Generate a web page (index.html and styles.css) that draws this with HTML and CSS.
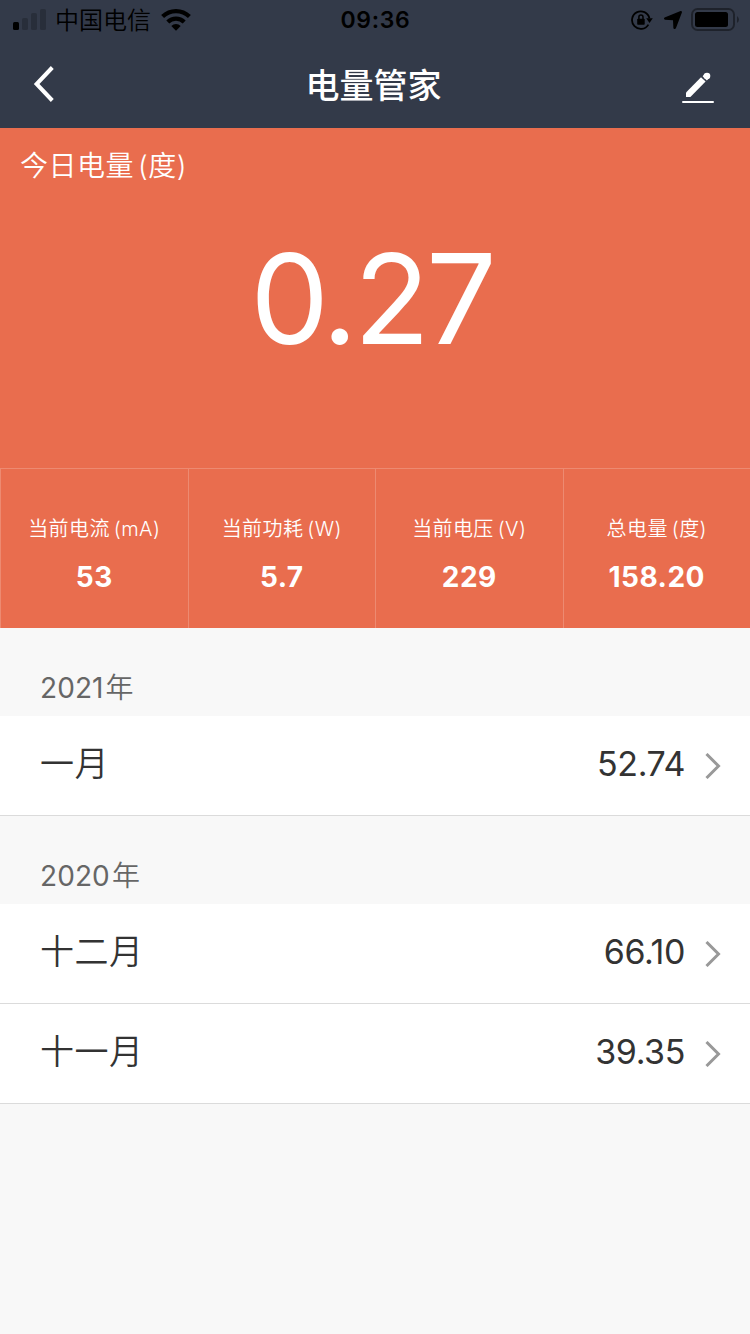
FILE: index.html
```
<!DOCTYPE html>
<html lang="zh-CN">
<head>
  <meta charset="UTF-8">
  <title>电量管家</title>
  <meta name="viewport" content="width=device-width,initial-scale=1">
  <link rel="stylesheet" href="styles.css">
</head>
<body>
  <header class="header">
    <div class="status-bar">
      <div class="status-left">
        <svg class="signal" width="33" height="22" viewBox="0 0 33 22">
          <rect x="0" y="13" width="6" height="8" rx="1.5"/>
          <g fill-opacity="0.2">
            <rect x="9" y="9" width="6" height="12" rx="1.5"/>
            <rect x="18" y="4" width="6" height="17" rx="1.5"/>
            <rect x="27" y="0" width="6" height="21" rx="1.5"/>
          </g>
        </svg>
        <span class="carrier">中国电信</span>
        <svg class="wifi" width="30" height="22" viewBox="0 0 30 22">
          <g fill="none" stroke="#000" stroke-width="4.2">
            <path d="M1.6 7.6 A19.2 19.2 0 0 1 28.4 7.6"/>
            <path d="M6.8 13.1 A11.6 11.6 0 0 1 23.2 13.1"/>
          </g>
          <path d="M10.3 16.9 A6.6 6.6 0 0 1 19.7 16.9 L15 21.8 Z"/>
        </svg>
      </div>
      <span class="clock">09:36</span>
      <div class="status-right">
        <svg class="lock" width="22" height="20" viewBox="0 0 22 20">
          <path d="M17.4 14.6 A8.8 8.8 0 1 1 18.4 8.2" fill="none" stroke="#000" stroke-width="1.8"/>
          <path d="M15.2 8.2 H21.8 L18.5 13 Z"/>
          <rect x="6.2" y="8.7" width="7.5" height="6" rx="0.8"/>
          <path d="M7.9 9 V7 a2.05 2.05 0 0 1 4.1 0 V9" fill="none" stroke="#000" stroke-width="1.5"/>
        </svg>
        <svg class="location" width="18" height="18" viewBox="0 0 18 18">
          <path d="M16.6 0.1 Q18.2 -0.1 17.9 1.4 L12 17 Q10.6 19 9.4 17.2 L9 9.2 L1 8.8 Q-0.8 7.8 0.6 6.6 Z"/>
        </svg>
        <svg class="battery" width="48" height="24" viewBox="0 0 48 24">
          <rect x="1" y="1" width="42" height="21" rx="5.5" fill="none" stroke="#000" stroke-opacity="0.4" stroke-width="2"/>
          <rect x="4" y="4" width="33" height="15" rx="2.5"/>
          <path d="M46 8 Q48 9.5 48 11.5 Q48 13.5 46 15 Z" fill-opacity="0.4"/>
        </svg>
      </div>
    </div>
    <div class="nav-bar">
      <svg class="back" width="22" height="38" viewBox="0 0 22 38">
        <path d="M19.3 2.5 L3.6 19 L19.3 35.5" fill="none" stroke="#fff" stroke-width="4"/>
      </svg>
      <h1 class="title">电量管家</h1>
      <svg class="edit" width="32" height="32" viewBox="0 0 32 32">
        <path d="M4 21.4 L19 6.2 L23.6 10.6 L8.4 26 H4 Z" fill="#fff"/>
        <circle cx="25" cy="5" r="3.3" fill="#fff"/>
        <path d="M20.6 5.2 L22.6 3 L27 7.2 L24.8 9.4 Z" fill="#fff"/>
        <rect x="0" y="30" width="32" height="2" rx="1" fill="#fff"/>
      </svg>
    </div>
  </header>

  <section class="today">
    <div class="today-label">今日电量<span class="unit">(度)</span></div>
    <div class="today-value">0.27</div>
  </section>

  <section class="stats">
    <div class="stat">
      <span class="label">当前电流<span class="unit">(mA)</span></span>
      <span class="value">53</span>
    </div>
    <div class="stat">
      <span class="label">当前功耗<span class="unit">(W)</span></span>
      <span class="value">5.7</span>
    </div>
    <div class="stat">
      <span class="label">当前电压<span class="unit">(V)</span></span>
      <span class="value">229</span>
    </div>
    <div class="stat">
      <span class="label">总电量<span class="unit">(度)</span></span>
      <span class="value">158.20</span>
    </div>
  </section>

  <main class="history">
    <h2 class="year">2021<span class="han">年</span></h2>
    <div class="row">
      <span class="month">一月</span>
      <span class="amount">52.74</span>
      <svg class="arrow" width="16" height="26" viewBox="0 0 16 26"><path d="M1.5 1 L13.5 13 L1.5 25"/></svg>
    </div>
    <h2 class="year">2020<span class="han">年</span></h2>
    <div class="row">
      <span class="month">十二月</span>
      <span class="amount">66.10</span>
      <svg class="arrow" width="16" height="26" viewBox="0 0 16 26"><path d="M1.5 1 L13.5 13 L1.5 25"/></svg>
    </div>
    <div class="row">
      <span class="month">十一月</span>
      <span class="amount">39.35</span>
      <svg class="arrow" width="16" height="26" viewBox="0 0 16 26"><path d="M1.5 1 L13.5 13 L1.5 25"/></svg>
    </div>
  </main>
</body>
</html>
```
FILE: styles.css
```
:root {
  --bar:     #333a49;
  --accent:  #e96d4e;
  --line:    rgba(255, 255, 255, 0.2);
  --page:    #f8f8f8;
  --border:  #dbdbdb;
  --text:    #333;
  --muted:   #666;
}
* { box-sizing: border-box; }
html, body {
  margin: 0; padding: 0;
  min-height: 100%;
  font-family: Inter, "Noto Sans CJK SC", sans-serif;
  background: var(--page);
  color: var(--text);
}
svg { display: block; flex: none; }
h1, h2 { margin: 0; font-weight: 400; }

/* status bar + nav */
.header { background: var(--bar); height: 128px; }
.status-bar {
  height: 40px;
  display: grid; grid-template-columns: 1fr auto 1fr; align-items: center;
  padding: 0 11px 0 13px;
  color: #000;
}
.status-left, .status-right { display: flex; align-items: center; }
.status-left { margin-top: -1px; }
.status-right { justify-content: flex-end; }
.carrier {
  margin: 0 10px 0 9px;
  padding-top: 3px;
  font-size: 24px; line-height: 38px;
  font-weight: 350;
}
.clock {
  padding: 1px 1px 0 0;
  font-size: 23px; line-height: 39px; font-weight: 600; letter-spacing: 0.7px;
}
.location { margin: 0 9px 0 11px; }
.nav-bar {
  height: 88px;
  display: grid; grid-template-columns: 1fr auto 1fr; align-items: center;
  padding: 0 36px 0 33px;
}
.title {
  padding-top: 3px;
  color: #fff;
  font-size: 34px; font-weight: 500; line-height: 85px;
}
.edit { margin-top: 6px; justify-self: end; }

/* today */
.today {
  height: 340px;
  padding: 17px 20px 0;
  background: var(--accent); color: #fff;
}
.today-label { font-size: 28px; line-height: 42px; letter-spacing: 0.5px; font-weight: 350; }
.today-label .unit { margin-left: 4px; }
.today-value {
  margin-top: 32px; padding-right: 7px;
  font-size: 125px; line-height: 160px; letter-spacing: -4px;
  text-align: center;
}

/* live readings */
.stats {
  height: 160px;
  display: grid; grid-template-columns: repeat(4, 1fr);
  background: var(--accent); color: #fff;
  border-top: 1px solid var(--line);
}
.stat {
  display: flex; flex-direction: column; align-items: center;
  padding-top: 45px;
  border-left: 1px solid var(--line);
}
.stat .label { font-size: 20px; line-height: 30px; letter-spacing: 0.4px; font-weight: 350; }
.stat .unit { margin-left: 4px; }
.stat .value { margin-top: 13px; font-size: 28px; line-height: 40px; font-weight: 700; letter-spacing: 0.5px; }

/* monthly history */
.year {
  height: 88px;
  padding: 39px 40px 0;
  font-size: 28px; line-height: 42px; letter-spacing: 0.1px;
  color: var(--muted);
}
.year .han { margin-left: 2px; font-weight: 350; }
.row {
  height: 100px;
  display: flex; align-items: center;
  padding: 0 29px 0 40px;
  background: #fff;
  border-bottom: 1px solid var(--border);
}
.month { font-size: 34px; line-height: 50px; margin-top: -4px; letter-spacing: 0.5px; font-weight: 350; }
.amount { margin: -4px 20px 0 auto; font-size: 34px; line-height: 50px; letter-spacing: -0.4px; }
.arrow path { fill: none; stroke: #999; stroke-width: 3; }
```
